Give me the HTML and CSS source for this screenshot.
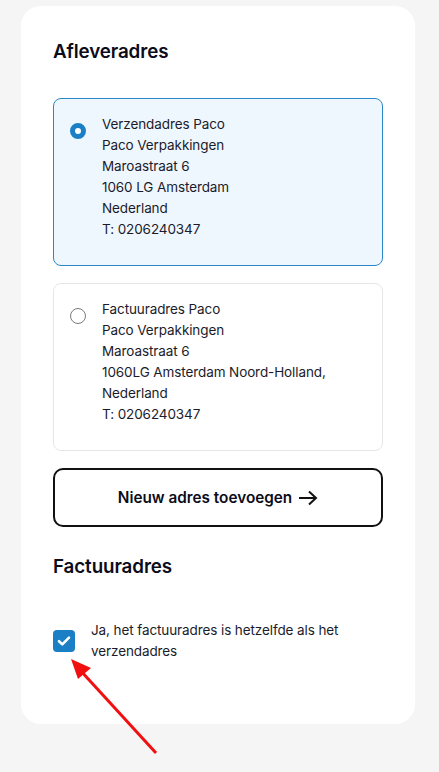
FILE: index.html
```html
<!DOCTYPE html>
<html lang="nl">
<head>
<meta charset="utf-8">
<link rel="stylesheet" href="styles.css">
</head>
<body>
<div class="card">
  <h2 class="title">Afleveradres</h2>
  <div class="addresses">
    <label class="addr addr-selected">
      <span class="radio radio-on"></span>
      <span class="lines">
        <span>Verzendadres Paco</span>
        <span>Paco Verpakkingen</span>
        <span>Maroastraat 6</span>
        <span>1060 LG Amsterdam</span>
        <span>Nederland</span>
        <span>T: 0206240347</span>
      </span>
    </label>
    <label class="addr">
      <span class="radio"></span>
      <span class="lines">
        <span>Factuuradres Paco</span>
        <span>Paco Verpakkingen</span>
        <span>Maroastraat 6</span>
        <span>1060LG Amsterdam Noord-Holland,</span>
        <span>Nederland</span>
        <span>T: 0206240347</span>
      </span>
    </label>
  </div>
  <button class="add-btn">Nieuw adres toevoegen
    <svg class="arrow-icon" width="20" height="16" viewBox="0 0 20 16"><path d="M1 8H18M11 1.5L18 8L11 14.5" fill="none" stroke="#111" stroke-width="2"/></svg>
  </button>
  <h2 class="title title-2">Factuuradres</h2>
  <label class="check-row">
    <span class="checkbox"><svg width="14" height="12" viewBox="0 0 14 12"><path d="M2 6.2L5.3 9.4L12 2.6" fill="none" stroke="#fff" stroke-width="2.6" stroke-linecap="round" stroke-linejoin="round"/></svg></span>
    <span class="check-text">Ja, het factuuradres is hetzelfde als het verzendadres</span>
  </label>
</div>
<svg class="annot" width="439" height="772" viewBox="0 0 439 772">
  <line x1="156" y1="753" x2="80" y2="670" stroke="#f01010" stroke-width="3"/>
  <polygon points="71,659 91,668 78,679" fill="#f01010"/>
</svg>
</body>
</html>
```
FILE: styles.css
```css
* { box-sizing: border-box; }
html, body { margin: 0; padding: 0; }
body {
  background: #f5f5f5;
  font-family: Inter, "Noto Sans", sans-serif;
  color: #1a1a2a;
  width: 439px;
  height: 772px;
  overflow: hidden;
  position: relative;
}
.card {
  margin: 6px 0 0 21px;
  width: 394px;
  height: 718px;
  background: #fff;
  border-radius: 20px;
  padding: 34px 32px 0 32px;
}
.title {
  margin: 0;
  font-size: 18.8px;
  line-height: 24px;
  font-weight: 600;
  color: #0c0c1a;
  letter-spacing: -0.1px;
}
.addresses {
  margin-top: 34px;
  display: flex;
  flex-direction: column;
  gap: 17px;
}
.addr {
  display: flex;
  gap: 16px;
  border: 1px solid #e6e6e6;
  border-radius: 8px;
  padding: 15px 16px 25px 16px;
  background: #fff;
}
.addr-selected {
  border-color: #2a88c8;
  background: #eff7fe;
}
.radio {
  flex: none;
  width: 16px;
  height: 16px;
  margin-top: 9px;
  border-radius: 50%;
  border: 1.5px solid #7a7a7a;
  background: #fff;
}
.radio-on {
  border: 5px solid #1a7fc4;
}
.lines {
  display: flex;
  flex-direction: column;
  font-size: 13.5px;
  letter-spacing: -0.1px;
  line-height: 21px;
  color: #1b1b2b;
}
.add-btn {
  margin-top: 17px;
  width: 100%;
  height: 59px;
  border: 2px solid #111;
  border-radius: 10px;
  background: #fff;
  font-family: Inter, "Noto Sans", sans-serif;
  font-size: 15.3px;
  font-weight: 600;
  color: #0c0c1a;
  display: flex;
  align-items: center;
  justify-content: center;
  gap: 6px;
  padding: 0;
}
.arrow-icon { display: block; }
.title-2 { margin-top: 28px; }
.check-row {
  margin-top: 41px;
  display: flex;
  gap: 16px;
}
.checkbox {
  flex: none;
  width: 22px;
  height: 22px;
  margin-top: 10px;
  border-radius: 4px;
  background: #1a7fc4;
  display: flex;
  align-items: center;
  justify-content: center;
}
.check-text {
  font-size: 13.5px;
  letter-spacing: -0.1px;
  line-height: 21px;
  color: #1b1b2b;
}
.annot {
  position: absolute;
  left: 0;
  top: 0;
  pointer-events: none;
}
```
